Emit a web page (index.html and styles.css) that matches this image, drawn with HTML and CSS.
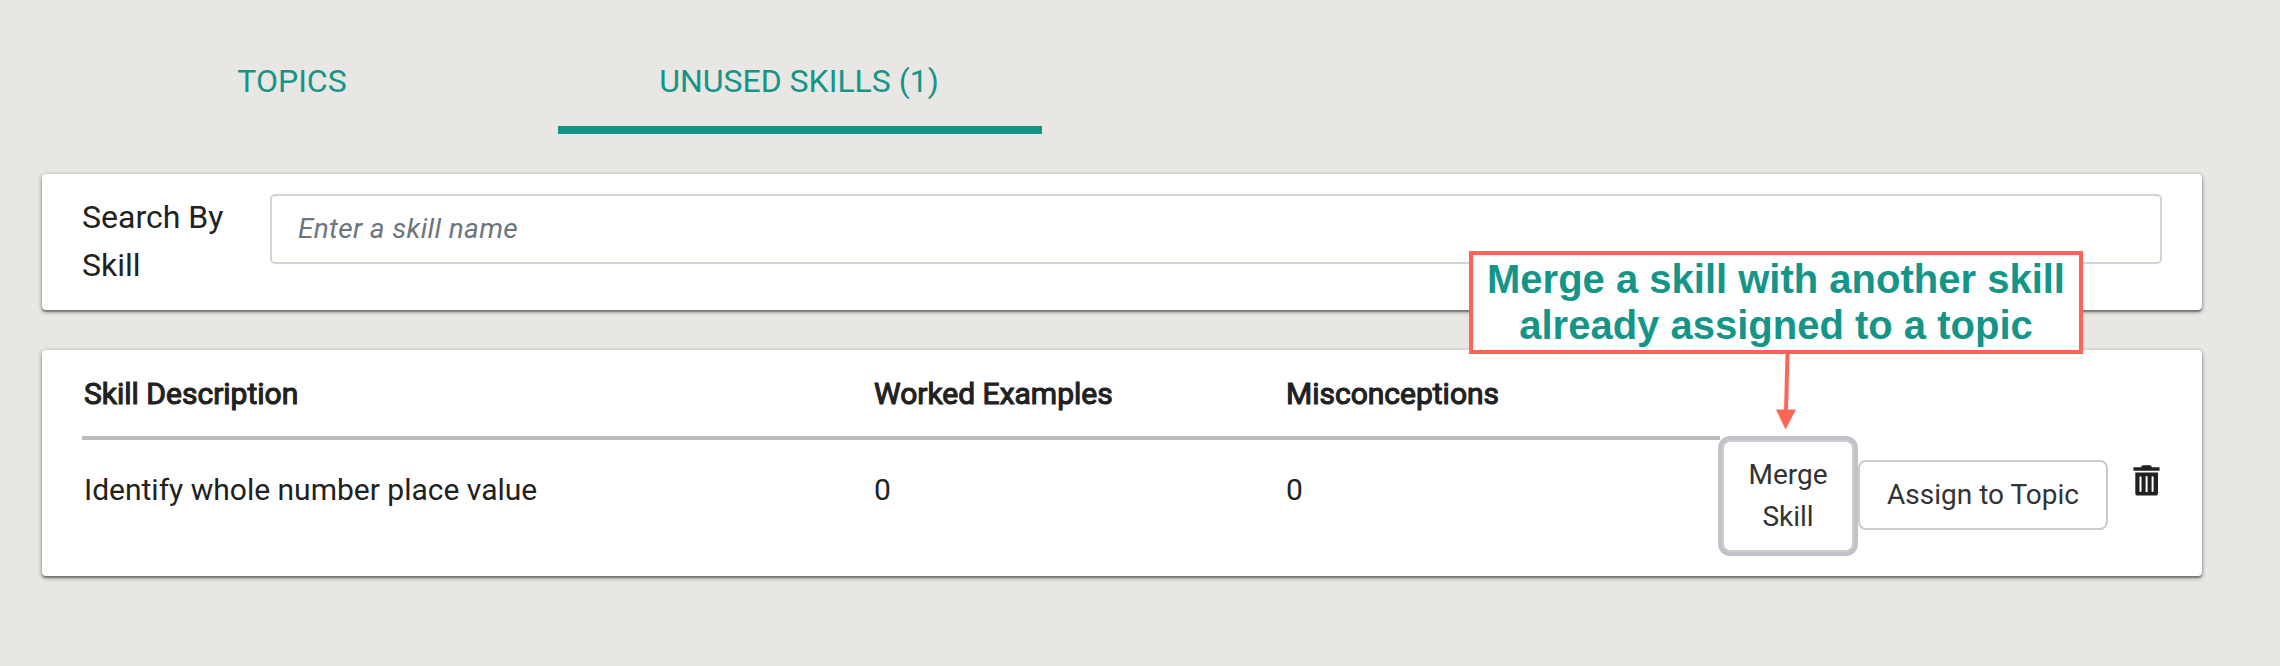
FILE: index.html
```html
<!DOCTYPE html>
<html lang="en">
<head>
<meta charset="utf-8">
<title>Skills</title>
<link rel="stylesheet" href="styles.css">
</head>
<body>
<main class="page">
  <nav class="tabs">
    <a class="tab tab-topics"><span class="t-topics">TOPICS</span></a>
    <a class="tab tab-active"><span class="t-unused">UNUSED SKILLS (1)</span></a>
  </nav>
  <section class="card search">
    <label class="search-label" for="skill">Search By Skill</label>
    <input class="search-input" id="skill" type="text" placeholder="Enter a skill name">
  </section>
  <section class="card skills">
    <div class="table">
      <div class="row head">
        <span class="th-desc">Skill Description</span><span class="th-worked">Worked Examples</span><span class="th-misc">Misconceptions</span>
      </div>
      <div class="row body">
        <span class="td-desc">Identify whole number place value</span><span>0</span><span>0</span>
      </div>
    </div>
    <div class="actions">
      <button class="btn merge">Merge<br>Skill</button>
      <button class="btn assign">Assign to Topic</button>
      <svg class="trash" viewBox="0 0 27 31">
        <path fill="#212121" d="M1 2.3H8.2Q8.4.3 10.2.3H16.8Q18.6.3 18.8 2.3H26Q26.6 2.3 26.6 3V5Q26.600 5.700 26 5.700H1Q.4 5.700.4 5V3Q.4 2.300 1 2.300Z"/>
        <path fill="#212121" fill-rule="evenodd" d="M2.300 7.500H25V28Q25 30.600 22.400 30.600H4.900Q2.300 30.600 2.300 28ZM7.500 11.300Q6.500 11.300 6.500 12.200V26Q6.500 26.900 7.500 26.900Q8.500 26.900 8.500 26V12.200Q8.500 11.300 7.500 11.300ZM12.600 11.300V26.900H14.600V11.300ZM18.600 12.200V26Q18.600 26.900 19.600 26.900Q20.600 26.900 20.600 26V12.200Q20.600 11.300 19.600 11.300Q18.600 11.300 18.600 12.200Z"/>
      </svg>
    </div>
  </section>
  <aside class="callout"><span>Merge a skill with another skill</span><span class="line2">already assigned to a topic</span></aside>
  <svg class="arrow" viewBox="0 0 22 78">
    <path d="M12.500 0L11 60" stroke="#ff6557" stroke-width="4" fill="none"/>
    <path d="M1 57.500H21L10.500 77.500Z" fill="#ff6557"/>
  </svg>
</main>
</body>
</html>
```
FILE: styles.css
```css
* { box-sizing: border-box; }
body {
  margin: 0;
  background: #e8e7e3;
  color: #212121;
  font-family: Roboto, sans-serif;
}
.page {
  position: relative;
  height: 666px;
  padding: 28px 78px 0 42px;
  overflow: hidden;
}
.tabs {
  display: flex;
  height: 106px;
  margin: 0 0 40px -16px;
}
.tab {
  display: flex;
  justify-content: center;
  padding-top: 29px;
  color: #159588;
  font-size: 32px;
  line-height: 48px;
  white-space: nowrap;
}
.tab-topics { width: 532px; }
.tab-active { width: 484px; padding-right: 2px; border-bottom: 8px solid #159588; }
.card {
  display: flex;
  background: #fff;
  border-radius: 4px;
  box-shadow: 0 2px 4px rgba(0, 0, 0, .38), 0 2px 1px rgba(0, 0, 0, .24), 0 0 4px rgba(0, 0, 0, .12);
}
.search {
  height: 136px;
  margin-bottom: 40px;
  padding: 20px 40px;
}
.search-label {
  width: 188px;
  margin-top: -1px;
  padding-right: 30px;
  font-size: 32px;
  line-height: 48px;
}
.search-input {
  flex: 1;
  height: 70px;
  padding: 0 26px 2px;
  border: 2px solid #ced4da;
  border-radius: 5px;
  background: #fff;
  font: italic 28px Roboto, sans-serif;
  letter-spacing: .34px;
}
.search-input::placeholder { color: #6c757d; opacity: 1; }
.skills { height: 226px; padding-left: 40px; }
.table { width: 1638px; font-size: 30px; }
.row {
  display: grid;
  grid-template-columns: 790px 412px 1fr;
  padding-left: 2px;
  line-height: 48px;
  white-space: nowrap;
}
.row > span { justify-self: start; }
.head {
  height: 90px;
  padding-top: 20px;
  border-bottom: 4px solid #bababa;
  -webkit-text-stroke: 1.100px #212121;
}
.body { padding-top: 26px; }
.actions { display: flex; align-items: flex-start; }
.btn {
  border: 2px solid #ccc;
  border-radius: 8px;
  background: #fff;
  color: #333;
  font: 28px/42px Roboto, sans-serif;
  padding: 0;
  white-space: nowrap;
}
.merge {
  width: 132px;
  height: 112px;
  margin: 90px 4px 0 2px;
  box-shadow: 0 0 0 4px #c0c4ca;
}
.assign { width: 250px; height: 70px; margin-top: 110px; }
.trash { width: 27px; height: 31px; margin: 115px 0 0 24.500px; }
.callout {
  position: absolute;
  left: 1469px;
  top: 251px;
  width: 614px;
  height: 103px;
  display: flex;
  flex-direction: column;
  align-items: center;
  padding-top: 1px;
  border: 4px solid #ff6557;
  background: #fff;
  color: #159588;
  font: bold 40px/46px "Liberation Sans", Arial, sans-serif;
  white-space: nowrap;
}
.arrow {
  position: absolute;
  left: 1775px;
  top: 352px;
  width: 22px;
  height: 78px;
}
```
